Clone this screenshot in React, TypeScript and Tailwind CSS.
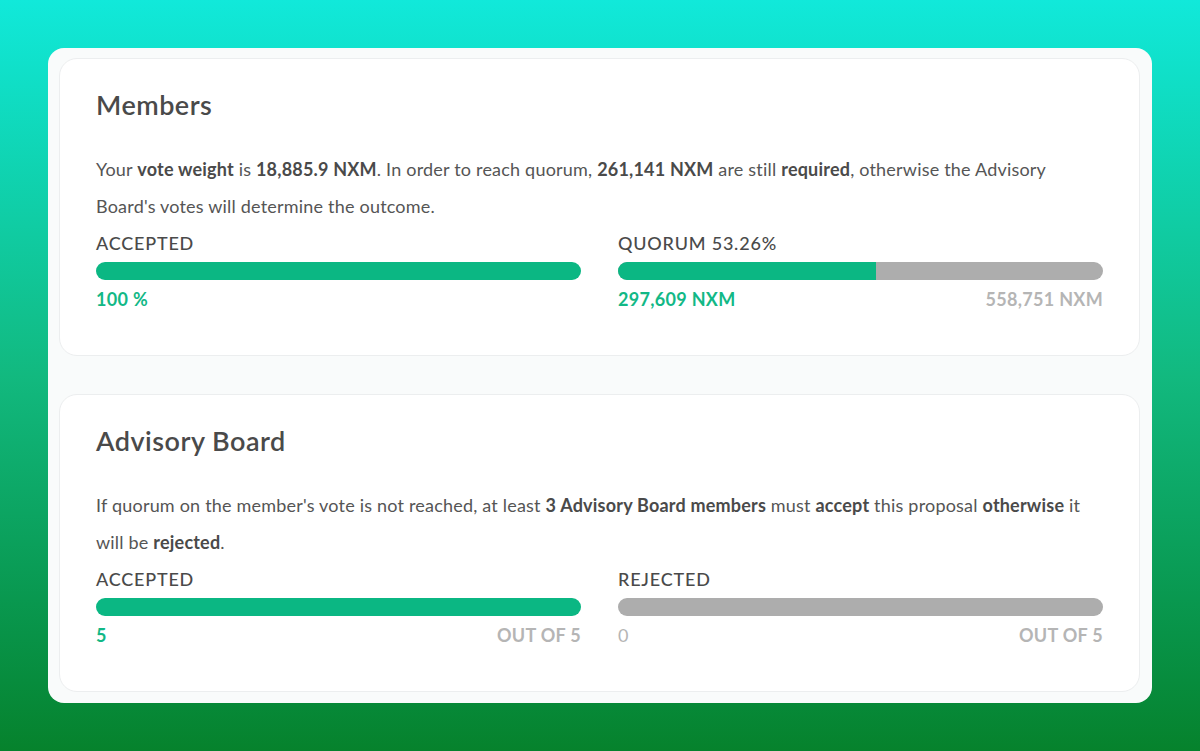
import React from "react";

const font = { fontFamily: "Lato, 'Open Sans', sans-serif" };

function Bar({ pct, label, left, right, leftGray }: { pct: number; label: string; left: string; right?: string; leftGray?: boolean }) {
  return (
    <div className="flex flex-col">
      <div className="text-[18px] leading-[22px] font-medium text-[#4a4a4a] tracking-[0.8px]">{label}</div>
      <div className="mt-[8px] h-[18px] rounded-full bg-[#adadad] overflow-hidden flex">
        <div className="h-full bg-[#0bb783]" style={{ width: `${pct}%` }} />
      </div>
      <div className="mt-[8px] flex justify-between text-[18px] leading-[22px] font-bold tracking-[0.3px]">
        <span className={leftGray ? "text-[#b5b5b5] font-normal" : "text-[#12b886]"}>{left}</span>
        {right && <span className="text-[#b5b5b5]">{right}</span>}
      </div>
    </div>
  );
}

const B = ({ children }: { children: React.ReactNode }) => <b className="font-bold text-[#4a4a4a]">{children}</b>;

export default function App() {
  return (
    <div style={font} className="w-[1200px] h-[751px] bg-gradient-to-b from-[#11e9da] via-[#12b97f] to-[#06822c] pt-[48px] px-[48px]">
      <div className="rounded-[16px] bg-[#f9fbfb] pt-[10px] pb-[11px] pl-[11px] pr-[12px] flex flex-col gap-[38px]">
        <div className="bg-white rounded-[18px] border border-[#eceeef] h-[298px] px-[36px] pt-[30px]">
          <h2 className="text-[27px] leading-[32px] tracking-[0.5px] text-[#4a4a4a] font-semibold">Members</h2>
          <p className="mt-[30px] text-[18px] leading-[37px] text-[#555] tracking-[0.2px]">
            Your <B>vote weight</B> is <B>18,885.9 NXM</B>. In order to reach quorum, <B>261,141 NXM</B> are still <B>required</B>, otherwise the Advisory Board's votes will determine the outcome.
          </p>
          <div className="mt-[7px] grid grid-cols-2 gap-[37px]">
            <Bar pct={100} label="ACCEPTED" left="100 %" />
            <Bar pct={53.26} label="QUORUM 53.26%" left="297,609 NXM" right="558,751 NXM" />
          </div>
        </div>
        <div className="bg-white rounded-[18px] border border-[#eceeef] h-[298px] px-[36px] pt-[30px]">
          <h2 className="text-[27px] leading-[32px] tracking-[0.5px] text-[#4a4a4a] font-semibold">Advisory Board</h2>
          <p className="mt-[30px] text-[18px] leading-[37px] text-[#555] tracking-[0.2px]">
            If quorum on the member's vote is not reached, at least <B>3 Advisory Board members</B> must <B>accept</B> this proposal <B>otherwise</B> it will be <B>rejected</B>.
          </p>
          <div className="mt-[7px] grid grid-cols-2 gap-[37px]">
            <Bar pct={100} label="ACCEPTED" left="5" right="OUT OF 5" />
            <Bar pct={0} label="REJECTED" left="0" right="OUT OF 5" leftGray />
          </div>
        </div>
      </div>
    </div>
  );
}
